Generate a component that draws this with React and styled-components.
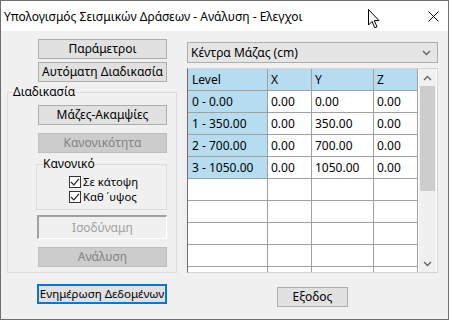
import styled, { createGlobalStyle } from "styled-components";

const GlobalStyle = createGlobalStyle`
  html, body {
    margin: 0;
    padding: 0;
    background: #ffffff;
  }
  * {
    box-sizing: border-box;
  }
`;

const Window = styled.div`
  width: 449px;
  height: 320px;
  border: 1px solid #6f6f6f;
  background: #f0f0f0;
  display: flex;
  flex-direction: column;
  font-family: "Noto Sans", "Open Sans", sans-serif;
  font-size: 12px;
  color: #000;
  overflow: hidden;
`;

const TitleBar = styled.div`
  position: relative;
  flex-shrink: 0;
  height: 30px;
  background: #fff;
  display: flex;
  align-items: center;
  justify-content: space-between;
  padding: 0 9px 0 3px;
`;

const Title = styled.span`
  font-size: 12px;
`;

const Cursor = styled.svg`
  position: absolute;
  left: 366px;
  top: 7px;
`;

const Body = styled.div`
  flex: 1;
  display: grid;
  grid-template-columns: 170px 251px;
  column-gap: 10px;
  padding: 0 9px 0 6px;
`;

const LeftPane = styled.div`
  display: flex;
  flex-direction: column;
  padding-top: 8px;
`;

const RightPane = styled.div`
  display: flex;
  flex-direction: column;
  padding-top: 11px;
`;

const Button = styled.button`
  font-family: inherit;
  font-size: ${(p) => (p.$focus ? "11.5px" : "12px")};
  white-space: nowrap;
  overflow: visible;
  width: ${(p) => p.$w || 129}px;
  height: 20px;
  margin: ${(p) => p.$m || "0"};
  padding: 0;
  background: ${(p) => (p.disabled ? "#cccccc" : "#e1e1e1")};
  color: ${(p) => (p.disabled ? "#838383" : "#000")};
  border: ${(p) => (p.$focus ? "2px solid #0078d7" : p.disabled ? "1px solid #bfbfbf" : "1px solid #adadad")};
  line-height: 16px;
  cursor: default;
`;

const Group = styled.fieldset`
  margin: ${(p) => p.$m || "0"};
  width: ${(p) => p.$w}px;
  border: 1px solid #dcdcdc;
  padding: ${(p) => p.$pad};
  display: flex;
  flex-direction: column;
  min-width: 0;
`;

const Legend = styled.legend`
  padding: 0;
  margin-left: ${(p) => p.$ml || 0}px;
  line-height: 16px;
  font-size: 12px;
`;

const CheckRow = styled.label`
  display: flex;
  align-items: center;
  height: 15px;
  line-height: 15px;
  font-size: 11.3px;
  margin-left: 26px;
  gap: 2px;
`;

const Box = styled.span`
  width: 12px;
  height: 12px;
  border: 1px solid #333;
  background: #fff;
  display: flex;
  align-items: center;
  justify-content: center;
`;

const Sunken = styled.div`
  width: 130px;
  height: 24px;
  margin: 5px 0 0 29px;
  border-top: 2px solid #a0a0a0;
  border-left: 2px solid #a0a0a0;
  border-right: 1px solid #fff;
  border-bottom: 1px solid #fff;
  color: #a0a0a0;
  display: flex;
  align-items: center;
  justify-content: center;
`;

const Combo = styled.div`
  height: 21px;
  border: 1px solid #adadad;
  background: #e5e5e5;
  display: flex;
  align-items: center;
  justify-content: space-between;
  padding: 0 6px 0 3px;
`;

const GridFrame = styled.div`
  margin-top: 5px;
  height: 205px;
  border: 1px solid #d4d4d4;
  border-left-color: #6d6d6d;
  background: #fff;
  display: flex;
  overflow: hidden;
`;

const Table = styled.div`
  display: grid;
  grid-template-columns: 80px 44px 62px 44px;
  grid-auto-rows: 22px;
  align-content: start;
  height: 226px;
`;

const Cell = styled.div`
  background: ${(p) => (p.$blue ? "#b6dcf0" : "#fff")};
  border-right: 1px solid #a0a0a0;
  border-bottom: 1px solid #a0a0a0;
  padding-left: ${(p) => (p.$first ? 4 : 3)}px;
  display: flex;
  align-items: center;
  white-space: nowrap;
`;

const ScrollBar = styled.div`
  width: 17px;
  margin-left: 1px;
  background: #f0f0f0;
  display: flex;
  flex-direction: column;
  align-items: center;
`;

const Arrow = styled.div`
  height: 17px;
  display: flex;
  align-items: center;
  justify-content: center;
`;

const Thumb = styled.div`
  width: 15px;
  height: 105px;
  background: #cdcdcd;
`;

const Spacer = styled.div`
  flex: 1;
`;

const rows = [
  ["0 - 0.00", "0.00", "0.00", "0.00"],
  ["1 - 350.00", "0.00", "350.00", "0.00"],
  ["2 - 700.00", "0.00", "700.00", "0.00"],
  ["3 - 1050.00", "0.00", "1050.00", "0.00"],
];

const Check = ({ children }) => (
  <CheckRow>
    <Box>
      <svg width="10" height="10" viewBox="0 0 10 10">
        <path d="M1 5 L3.8 7.8 L9 1.8" fill="none" stroke="#222" strokeWidth="1.2" />
      </svg>
    </Box>
    {children}
  </CheckRow>
);

const Chevron = ({ up }) => (
  <svg width="9" height="6" viewBox="0 0 9 6">
    <path d={up ? "M1 5 L4.5 1.5 L8 5" : "M1 1 L4.5 4.5 L8 1"} fill="none" stroke="#606060" strokeWidth="1.3" />
  </svg>
);

export default function App() {
  return (
    <>
      <GlobalStyle />
      <Window>
        <TitleBar>
          <Title>Υπολογισμός Σεισμικών Δράσεων - Ανάλυση - Ελεγχοι</Title>
          <svg width="11" height="11" viewBox="0 0 11 11">
            <path d="M0.5 0.5 L10.5 10.5 M10.5 0.5 L0.5 10.5" stroke="#000" strokeWidth="1" />
          </svg>
          <Cursor width="14" height="22" viewBox="0 0 14 22">
            <path d="M1.5 1.5 L1.5 17 L5 13.5 L7.8 19.8 L10 18.8 L7.3 12.6 L12 12.6 Z" fill="#fff" stroke="#000" strokeWidth="1" />
          </Cursor>
        </TitleBar>
        <Body>
          <LeftPane>
            <Button $m="0 0 0 31px">Παράμετροι</Button>
            <Button $m="3px 0 0 31px">Αυτόματη Διαδικασία</Button>
            <Group $m="2px 0 0 0" $w={170} $pad="5px 0 5px 0">
              <Legend $ml={5}>Διαδικασία</Legend>
              <Button $m="0 0 0 30px">Μάζες-Ακαμψίες</Button>
              <Button disabled $m="8px 0 0 30px">Κανονικότητα</Button>
              <Group $m="3px 0 0 28px" $w={131} $pad="2px 0 5px 6px">
                <Legend>Κανονικό</Legend>
                <Check>Σε κάτοψη</Check>
                <Check>Καθ ΄υψος</Check>
              </Group>
              <Sunken>Ισοδύναμη</Sunken>
              <Button disabled $m="8px 0 0 30px">Ανάλυση</Button>
            </Group>
            <Button $focus $w={130} $m="11px 0 0 30px">Ενημέρωση Δεδομένων</Button>
          </LeftPane>
          <RightPane>
            <Combo>
              <span>Κέντρα Μάζας (cm)</span>
              <Chevron />
            </Combo>
            <GridFrame>
              <Table>
                <Cell $blue $first>Level</Cell>
                <Cell $blue>X</Cell>
                <Cell $blue>Y</Cell>
                <Cell $blue>Z</Cell>
                {rows.map((r) =>
                  r.map((v, i) => (
                    <Cell key={r[0] + i} $blue={i === 0} $first={i === 0}>
                      {v}
                    </Cell>
                  ))
                )}
                {Array.from({ length: 20 }).map((_, i) => (
                  <Cell key={"e" + i} $first={i % 4 === 0} />
                ))}
              </Table>
              <ScrollBar>
                <Arrow>
                  <Chevron up />
                </Arrow>
                <Thumb />
                <Spacer />
                <Arrow>
                  <Chevron />
                </Arrow>
              </ScrollBar>
            </GridFrame>
            <Button $w={71} $m="14px auto 0">Εξοδος</Button>
          </RightPane>
        </Body>
      </Window>
    </>
  );
}
